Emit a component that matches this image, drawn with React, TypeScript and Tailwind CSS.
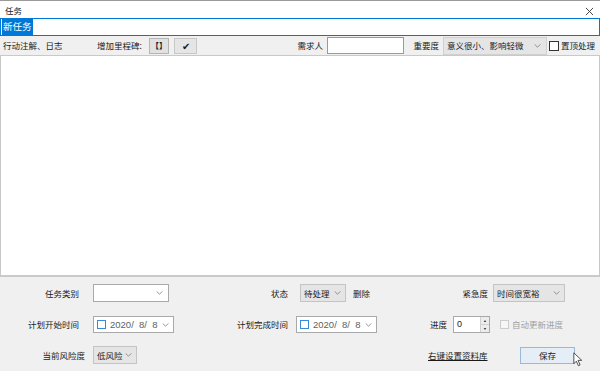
const FONT = "font-['Noto_Sans_CJK_SC','Liberation_Sans',sans-serif]";

function Chevron({ className = "" }: { className?: string }) {
  return (
    <svg viewBox="0 0 8 5" className={"h-[4px] w-[7px] " + className} aria-hidden="true">
      <path d="M0.5 0.5 L4 4 L7.5 0.5" fill="none" stroke="#7a7a7a" strokeWidth="1" />
    </svg>
  );
}

function Label({ w, children }: { w: string; children: React.ReactNode }) {
  return <div className={w + " shrink-0 text-right"}>{children}</div>;
}

function GraySelect({ w, value }: { w: string; value: string }) {
  return (
    <div className={w + " flex h-[18px] shrink-0 items-center justify-between border border-[#c4c4c4] bg-[#e5e5e5] pl-[3px] pr-[4px]"}>
      <span>{value}</span>
      <Chevron />
    </div>
  );
}

function DatePicker() {
  return (
    <div className="flex h-[17px] w-[81px] shrink-0 items-center border border-[#a9a9a9] bg-white pl-[3px] pr-[4px]">
      <span className="h-[9px] w-[9px] border border-[#3c8ad6] bg-white" />
      <span className="ml-[4px] flex-1 font-['Liberation_Sans',sans-serif] text-[9.5px] text-[#606060] whitespace-pre">2020/  8/  8</span>
      <Chevron />
    </div>
  );
}

export default function App() {
  return (
    <div className={FONT + " relative flex h-[371px] w-[600px] flex-col overflow-hidden bg-[#f0f0f0] text-[8.5px] leading-none text-[#1a1a1a]"}>
      {/* title bar */}
      <div className="flex h-[18px] shrink-0 items-center justify-between border-t border-[#9a9a9a] bg-white pl-[5px] pr-[6px]">
        <span className="pt-[1px] text-[8.5px]">任务</span>
        <svg viewBox="0 0 10 10" className="mt-[3px] h-[9px] w-[9px]" aria-hidden="true">
          <path d="M1 1 L9 9 M9 1 L1 9" stroke="#333" strokeWidth="1" />
        </svg>
      </div>

      {/* task name */}
      <div className="flex h-[18px] shrink-0 items-center border border-[#0078d7] bg-white pl-[1px]">
        <span className="bg-[#0078d7] px-[1px] py-[3px] text-[9.5px] text-white">新任务</span>
      </div>

      {/* toolbar */}
      <div className="flex h-[19px] shrink-0 items-center">
        <div className="w-[97px] shrink-0 pl-[3px]">行动注解、日志</div>
        <div className="w-[52px] shrink-0">增加里程碑:</div>
        <div className="flex h-[16px] w-[20px] shrink-0 items-center justify-center border border-[#b5b5b5] bg-[#e1e1e1] text-[8px] font-bold">
          【】
        </div>
        <div className="ml-[5px] flex h-[16px] w-[23px] shrink-0 items-center justify-center border border-[#c8c8c8] bg-[#e5e5e5] text-[10px]">
          ✔
        </div>
        <Label w="w-[126px]">需求人</Label>
        <div className="ml-[4px] h-[17px] w-[77px] shrink-0 border border-[#9a9a9a] bg-white" />
        <Label w="w-[35px]">重要度</Label>
        <div className="ml-[4px] flex h-[18px] w-[104px] shrink-0 items-center justify-between border border-[#d0d0d0] bg-[#e5e5e5] pl-[3px] pr-[5px]">
          <span>意义很小、影响轻微</span>
          <Chevron />
        </div>
        <span className="ml-[2px] h-[10px] w-[10px] shrink-0 border border-[#333] bg-white" />
        <span className="ml-[2px]">置顶处理</span>
      </div>

      {/* notes area */}
      <div className="h-[222px] shrink-0 border border-b-2 border-[#c9c9c9] bg-white" />

      {/* form panel */}
      <div className="flex flex-1 flex-col pt-[7px]">
        <div className="flex h-[18px] items-center">
          <Label w="w-[79px]">任务类别</Label>
          <div className="ml-[14px] flex h-[18px] w-[76px] shrink-0 items-center justify-end border border-[#a9a9a9] bg-white pr-[5px]">
            <Chevron />
          </div>
          <Label w="w-[119px]">状态</Label>
          <div className="ml-[12px]">
            <GraySelect w="w-[46px]" value="待处理" />
          </div>
          <div className="ml-[7px] w-[20px] shrink-0">删除</div>
          <Label w="w-[115px]">紧急度</Label>
          <div className="ml-[5px]">
            <GraySelect w="w-[72px]" value="时间很宽裕" />
          </div>
        </div>

        <div className="mt-[14px] flex h-[17px] items-center">
          <Label w="w-[79px]">计划开始时间</Label>
          <div className="ml-[14px]">
            <DatePicker />
          </div>
          <Label w="w-[114px]">计划完成时间</Label>
          <div className="ml-[8px]">
            <DatePicker />
          </div>
          <Label w="w-[70px]">进度</Label>
          <div className="ml-[6px] flex h-[17px] w-[37px] shrink-0 border border-[#a9a9a9] bg-white">
            <span className="flex-1 pl-[3px] pt-[3px] font-['Liberation_Sans',sans-serif] text-[9px]">0</span>
            <div className="flex w-[9px] flex-col border-l border-[#d0d0d0]">
              <div className="flex flex-1 items-center justify-center border-b border-[#d0d0d0] bg-[#ececec]">
                <svg viewBox="0 0 4 3" className="h-[2px] w-[4px]"><path d="M0 3 L2 0 L4 3Z" fill="#444" /></svg>
              </div>
              <div className="flex flex-1 items-center justify-center bg-[#ececec]">
                <svg viewBox="0 0 4 3" className="h-[2px] w-[4px]"><path d="M0 0 L4 0 L2 3Z" fill="#444" /></svg>
              </div>
            </div>
          </div>
          <span className="ml-[10px] h-[9px] w-[9px] shrink-0 border border-[#cccccc] bg-[#f6f6f6]" />
          <span className="ml-[3px] text-[#a0a0a0]">自动更新进度</span>
        </div>

        <div className="mt-[13px] flex h-[18px] items-center">
          <Label w="w-[85px]">当前风险度</Label>
          <div className="ml-[8px]">
            <GraySelect w="w-[44px]" value="低风险" />
          </div>
          <span className="ml-[291px] w-[60px] shrink-0 underline underline-offset-1">右键设置资料库</span>
          <div className="ml-[32px] flex h-[17px] w-[55px] shrink-0 items-center justify-center border border-[#9cb8d4] bg-[#e5eef7]">
            保存
          </div>
        </div>
      </div>

      {/* mouse cursor over the save button */}
      <svg viewBox="0 0 12 18" className="absolute left-[573px] top-[352px] h-[15px] w-[10px]" aria-hidden="true">
        <path d="M1 1 L1 14 L4 11 L6.5 16.5 L8.5 15.5 L6 10 L10.5 10 Z" fill="#fff" stroke="#333" strokeWidth="1" />
      </svg>
    </div>
  );
}
